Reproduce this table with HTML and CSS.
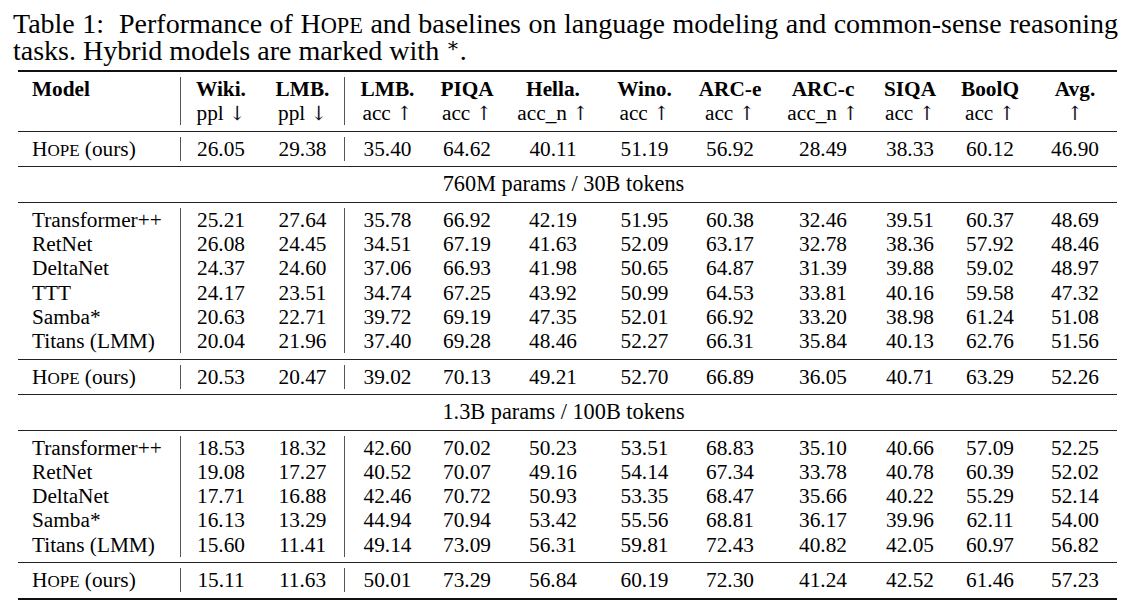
FILE: index.html
```html
<!DOCTYPE html>
<html lang="en">
<head>
<meta charset="utf-8">
<title>Table 1</title>
<link rel="stylesheet" href="styles.css">
</head>
<body>
<div class="page">
  <p class="caption">
    <span class="cap-line first">Table 1:&nbsp; Performance of <span class="sc">H<span class="scs">OPE</span></span> and baselines on language modeling and common-sense reasoning</span>
    <span class="cap-line">tasks. Hybrid models are marked with <sup class="ast">∗</sup>.</span>
  </p>

  <div class="tbl">
    <div class="block head">
      <div class="row">
        <div class="c name"><div class="hd">Model</div></div>
        <div class="c bar"><div class="hd">Wiki.</div><div class="sub">ppl <span class="arr">↓&#xFE0E;</span></div></div>
        <div class="c"><div class="hd">LMB.</div><div class="sub">ppl <span class="arr">↓&#xFE0E;</span></div></div>
        <div class="c bar"><div class="hd">LMB.</div><div class="sub">acc <span class="arr">↑&#xFE0E;</span></div></div>
        <div class="c"><div class="hd">PIQA</div><div class="sub">acc <span class="arr">↑&#xFE0E;</span></div></div>
        <div class="c"><div class="hd">Hella.</div><div class="sub">acc_n <span class="arr">↑&#xFE0E;</span></div></div>
        <div class="c"><div class="hd">Wino.</div><div class="sub">acc <span class="arr">↑&#xFE0E;</span></div></div>
        <div class="c"><div class="hd">ARC-e</div><div class="sub">acc <span class="arr">↑&#xFE0E;</span></div></div>
        <div class="c"><div class="hd">ARC-c</div><div class="sub">acc_n <span class="arr">↑&#xFE0E;</span></div></div>
        <div class="c"><div class="hd">SIQA</div><div class="sub">acc <span class="arr">↑&#xFE0E;</span></div></div>
        <div class="c"><div class="hd">BoolQ</div><div class="sub">acc <span class="arr">↑&#xFE0E;</span></div></div>
        <div class="c"><div class="hd">Avg.</div><div class="sub"><span class="arr">↑&#xFE0E;</span></div></div>
      </div>
    </div>

    <div class="block">
      <div class="row">
        <div class="c name"><span class="sc">H<span class="scs">OPE</span></span> (ours)</div>
        <div class="c bar">26.05</div><div class="c">29.38</div><div class="c bar">35.40</div><div class="c">64.62</div><div class="c">40.11</div><div class="c">51.19</div><div class="c">56.92</div><div class="c">28.49</div><div class="c">38.33</div><div class="c">60.12</div><div class="c">46.90</div>
      </div>
    </div>

    <div class="block section"><div class="sec">760M params / 30B tokens</div></div>

    <div class="block">
      <div class="row">
        <div class="c name">Transformer++</div>
        <div class="c bar">25.21</div><div class="c">27.64</div><div class="c bar">35.78</div><div class="c">66.92</div><div class="c">42.19</div><div class="c">51.95</div><div class="c">60.38</div><div class="c">32.46</div><div class="c">39.51</div><div class="c">60.37</div><div class="c">48.69</div>
      </div>
      <div class="row">
        <div class="c name">RetNet</div>
        <div class="c bar">26.08</div><div class="c">24.45</div><div class="c bar">34.51</div><div class="c">67.19</div><div class="c">41.63</div><div class="c">52.09</div><div class="c">63.17</div><div class="c">32.78</div><div class="c">38.36</div><div class="c">57.92</div><div class="c">48.46</div>
      </div>
      <div class="row">
        <div class="c name">DeltaNet</div>
        <div class="c bar">24.37</div><div class="c">24.60</div><div class="c bar">37.06</div><div class="c">66.93</div><div class="c">41.98</div><div class="c">50.65</div><div class="c">64.87</div><div class="c">31.39</div><div class="c">39.88</div><div class="c">59.02</div><div class="c">48.97</div>
      </div>
      <div class="row">
        <div class="c name">TTT</div>
        <div class="c bar">24.17</div><div class="c">23.51</div><div class="c bar">34.74</div><div class="c">67.25</div><div class="c">43.92</div><div class="c">50.99</div><div class="c">64.53</div><div class="c">33.81</div><div class="c">40.16</div><div class="c">59.58</div><div class="c">47.32</div>
      </div>
      <div class="row">
        <div class="c name">Samba*</div>
        <div class="c bar">20.63</div><div class="c">22.71</div><div class="c bar">39.72</div><div class="c">69.19</div><div class="c">47.35</div><div class="c">52.01</div><div class="c">66.92</div><div class="c">33.20</div><div class="c">38.98</div><div class="c">61.24</div><div class="c">51.08</div>
      </div>
      <div class="row">
        <div class="c name">Titans (LMM)</div>
        <div class="c bar">20.04</div><div class="c">21.96</div><div class="c bar">37.40</div><div class="c">69.28</div><div class="c">48.46</div><div class="c">52.27</div><div class="c">66.31</div><div class="c">35.84</div><div class="c">40.13</div><div class="c">62.76</div><div class="c">51.56</div>
      </div>
    </div>

    <div class="block">
      <div class="row">
        <div class="c name"><span class="sc">H<span class="scs">OPE</span></span> (ours)</div>
        <div class="c bar">20.53</div><div class="c">20.47</div><div class="c bar">39.02</div><div class="c">70.13</div><div class="c">49.21</div><div class="c">52.70</div><div class="c">66.89</div><div class="c">36.05</div><div class="c">40.71</div><div class="c">63.29</div><div class="c">52.26</div>
      </div>
    </div>

    <div class="block section"><div class="sec">1.3B params / 100B tokens</div></div>

    <div class="block">
      <div class="row">
        <div class="c name">Transformer++</div>
        <div class="c bar">18.53</div><div class="c">18.32</div><div class="c bar">42.60</div><div class="c">70.02</div><div class="c">50.23</div><div class="c">53.51</div><div class="c">68.83</div><div class="c">35.10</div><div class="c">40.66</div><div class="c">57.09</div><div class="c">52.25</div>
      </div>
      <div class="row">
        <div class="c name">RetNet</div>
        <div class="c bar">19.08</div><div class="c">17.27</div><div class="c bar">40.52</div><div class="c">70.07</div><div class="c">49.16</div><div class="c">54.14</div><div class="c">67.34</div><div class="c">33.78</div><div class="c">40.78</div><div class="c">60.39</div><div class="c">52.02</div>
      </div>
      <div class="row">
        <div class="c name">DeltaNet</div>
        <div class="c bar">17.71</div><div class="c">16.88</div><div class="c bar">42.46</div><div class="c">70.72</div><div class="c">50.93</div><div class="c">53.35</div><div class="c">68.47</div><div class="c">35.66</div><div class="c">40.22</div><div class="c">55.29</div><div class="c">52.14</div>
      </div>
      <div class="row">
        <div class="c name">Samba*</div>
        <div class="c bar">16.13</div><div class="c">13.29</div><div class="c bar">44.94</div><div class="c">70.94</div><div class="c">53.42</div><div class="c">55.56</div><div class="c">68.81</div><div class="c">36.17</div><div class="c">39.96</div><div class="c">62.11</div><div class="c">54.00</div>
      </div>
      <div class="row">
        <div class="c name">Titans (LMM)</div>
        <div class="c bar">15.60</div><div class="c">11.41</div><div class="c bar">49.14</div><div class="c">73.09</div><div class="c">56.31</div><div class="c">59.81</div><div class="c">72.43</div><div class="c">40.82</div><div class="c">42.05</div><div class="c">60.97</div><div class="c">56.82</div>
      </div>
    </div>

    <div class="block">
      <div class="row">
        <div class="c name"><span class="sc">H<span class="scs">OPE</span></span> (ours)</div>
        <div class="c bar">15.11</div><div class="c">11.63</div><div class="c bar">50.01</div><div class="c">73.29</div><div class="c">56.84</div><div class="c">60.19</div><div class="c">72.30</div><div class="c">41.24</div><div class="c">42.52</div><div class="c">61.46</div><div class="c">57.23</div>
      </div>
    </div>
  </div>
</div>
</body>
</html>
```

FILE: styles.css
```css
html, body {
  margin: 0;
  padding: 0;
  background: #ffffff;
}

body {
  color: #000000;
  font-family: "Liberation Serif", "Times New Roman", "DejaVu Serif", serif;
}

.page {
  width: 1127px;
}

.caption {
  margin: 10px 0 0 13px;
  width: 1105px;
  height: 54px;
  font-size: 28px;
  line-height: 27px;
}

.cap-line {
  display: block;
  height: 27px;
  white-space: nowrap;
}

.cap-line.first {
  text-align: justify;
  text-align-last: justify;
}

.scs {
  font-size: 0.8em;
  line-height: 1;
}

.ast {
  font-size: 0.72em;
  line-height: 0;
  vertical-align: 0.42em;
}

.arr {
  font-family: "DejaVu Serif", "DejaVu Sans", serif;
  font-variant-emoji: text;
  font-weight: normal;
  font-size: 0.92em;
  line-height: 1;
  color: #111122;
}

.tbl {
  margin: 6px 0 0 18px;
  width: 1099px;
  border-top: 2px solid #111111;
  border-bottom: 2px solid #111111;
  font-size: 21.3px;
  line-height: 24.2px;
}

.block {
  padding: 5px 0 5.4px;
  border-bottom: 1px solid #222222;
}

.block:last-child {
  border-bottom: none;
}

.row {
  display: grid;
  grid-template-columns: 162px 81px 83px 86px 74px 98px 85px 86px 100px 74px 86px 84px;
}

.c {
  text-align: center;
  white-space: nowrap;
}

.c.name {
  text-align: left;
  padding-left: 14px;
}

.c.bar {
  border-left: 1px solid #555555;
}

.hd {
  font-weight: bold;
}

.sub {
  font-weight: normal;
  height: 24.2px;
}

.sec {
  text-align: center;
  padding-right: 8px;
  font-size: 22.3px;
}
```
